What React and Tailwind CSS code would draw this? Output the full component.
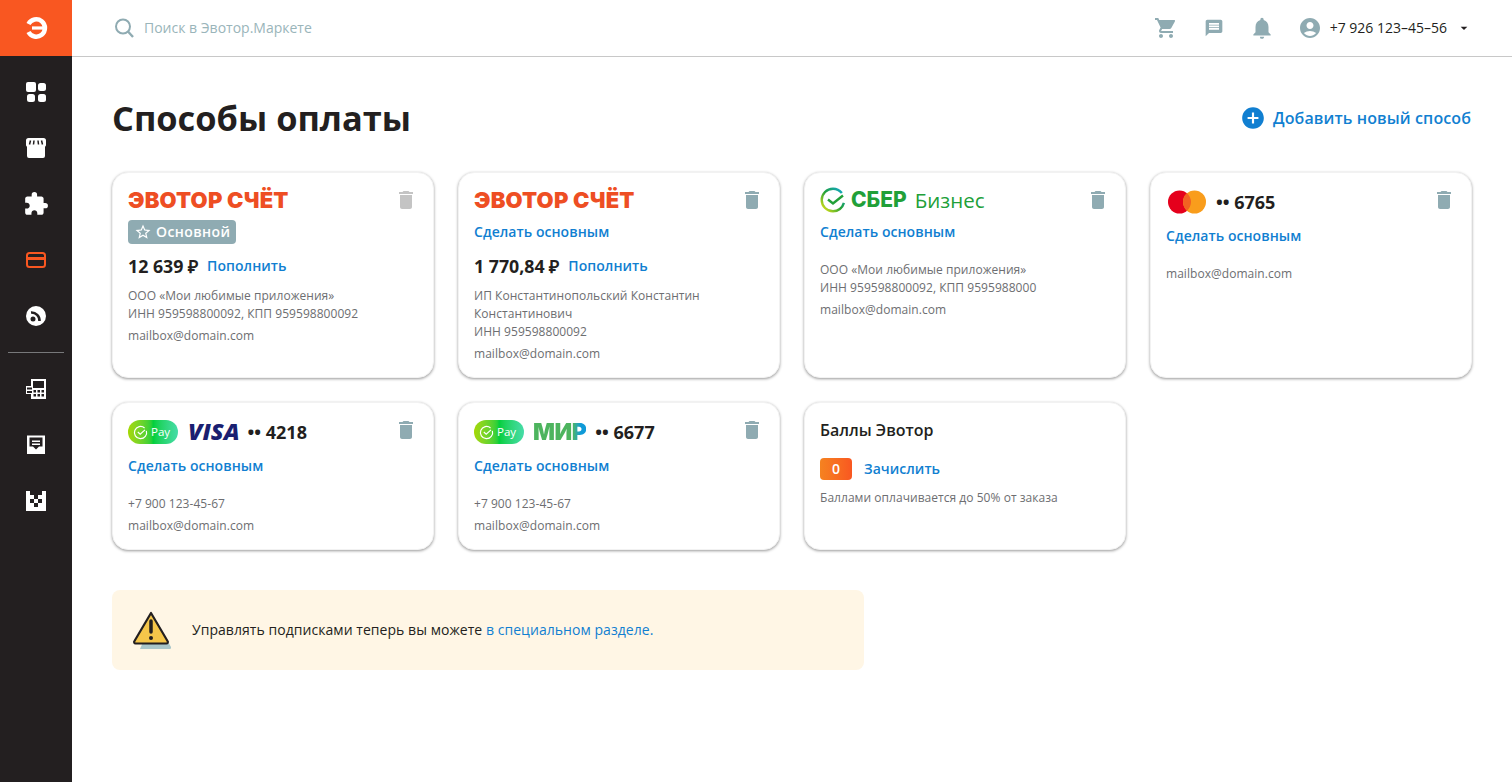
import React from 'react';
import {
    MdShoppingCart,
    MdNotifications,
    MdAccountCircle,
    MdDelete,
    MdStarBorder,
    MdAddCircle,
    MdExtension,
    MdMessage,
    MdArrowDropDown,
} from 'react-icons/md';

const DashIcon = () => (
    <svg width="24" height="24" viewBox="0 0 24 24" fill="currentColor">
        <rect x="2" y="2" width="10" height="10" rx="2" />
        <rect x="14" y="3" width="8" height="8" rx="2.5" />
        <rect x="3" y="14" width="8" height="8" rx="2.5" />
        <rect x="14" y="14" width="8" height="8" rx="2.5" />
    </svg>
);

const StoreIcon = () => (
    <svg width="24" height="24" viewBox="0 0 24 24" fill="currentColor">
        <path d="M4.5 2h15A2.5 2.5 0 0 1 22 4.5V9a2 2 0 0 1-1 1.7V20a2 2 0 0 1-2 2H5a2 2 0 0 1-2-2v-9.300A2 2 0 0 1 2 9V4.500A2.500 2.500 0 0 1 4.500 2z" />
        <path d="M6.500 4.500l-1 4M10 4.500l-.5 4M14 4.500l.5 4M17.500 4.500l1 4" stroke="#231f20" strokeWidth="1.500" fill="none" />
    </svg>
);

const CardIcon = () => (
    <svg width="24" height="24" viewBox="0 0 24 24" fill="none" stroke="currentColor" strokeWidth="2">
        <rect x="3" y="5" width="18" height="14" rx="2.500" />
        <path d="M3 10.500h18" strokeWidth="3" />
    </svg>
);

const FeedIcon = () => (
    <svg width="24" height="24" viewBox="0 0 24 24">
        <circle cx="12" cy="12" r="10" fill="currentColor" />
        <circle cx="9" cy="15" r="2.500" fill="#231f20" />
        <path d="M7 8.500a8 8 0 0 1 8.500 8.500" stroke="#231f20" strokeWidth="2.600" fill="none" />
    </svg>
);

const TerminalIcon = () => (
    <svg width="24" height="24" viewBox="0 0 24 24" fill="currentColor">
        <path d="M7 2h15v20H7v-5H2v-8h5V2z" fillRule="evenodd" />
        <rect x="9" y="4" width="11" height="7" fill="#231f20" />
        <path d="M3 10.500h5v2H3zM3 14h5v2H3z" fill="#231f20" />
        <path d="M9.500 13h2.500v2.500H9.500zM13.500 13H16v2.500h-2.500zM17.500 13H20v2.500h-2.500zM9.500 17H12v2.500H9.500zM13.500 17H16v2.500h-2.500zM17.500 17H20v2.500h-2.500z" fill="#231f20" />
    </svg>
);

const ReceiptIcon = () => (
    <svg width="24" height="24" viewBox="0 0 24 24" fill="currentColor">
        <path d="M3 2.500h18V21H3z" />
        <path d="M5.500 4.500h13v9H15l-3 3-3-3H5.500z" fill="#231f20" />
        <path d="M8 7.500h8v1.600H8zM8 10.500h8v1.600H8z" />
    </svg>
);

const QrIcon = () => (
    <svg width="24" height="24" viewBox="0 0 24 24" fill="currentColor">
        <rect x="2" y="2" width="20" height="20" />
        <path d="M6 2h4v2H6zM10 2h8v4h-4v4h-4V6H6V2zM6 10h4v4H6zM14 10h4v4h-4zM10 14h4v4h-4z" fill="#231f20" />
    </svg>
);

const SIDE_ITEMS = [
    { icon: <DashIcon /> },
    { icon: <StoreIcon /> },
    { icon: <MdExtension size={26} /> },
    { icon: <CardIcon />, active: true },
    { icon: <FeedIcon /> },
];

const SIDE_ITEMS_BOTTOM = [<TerminalIcon key="t" />, <ReceiptIcon key="r" />, <QrIcon key="q" />];

const Sidebar = () => (
    <aside className="w-[72px] shrink-0 bg-[#231f20] text-white flex flex-col">
        <div className="h-14 mb-2 bg-[#f95721] flex items-center justify-center">
            <svg width="24" height="24" viewBox="0 0 24 24" fill="none" stroke="#fff" strokeWidth="4.500">
                <path d="M4.500 8A8.700 8.700 0 1 1 4.500 16" />
                <path d="M8 12h11" strokeWidth="3.200" />
            </svg>
        </div>
        {SIDE_ITEMS.map((item, i) => (
            <div key={i} className={item.active ? 'h-14 flex items-center justify-center text-[#f95721]' : 'h-14 flex items-center justify-center'}>
                {item.icon}
            </div>
        ))}
        <div className="h-px bg-[#77787a] mx-2 my-2" />
        {SIDE_ITEMS_BOTTOM.map((icon, i) => (
            <div key={i} className="h-14 flex items-center justify-center">
                {icon}
            </div>
        ))}
    </aside>
);

const Header = () => (
    <header className="h-[57px] shrink-0 border-b border-[#c8c8c8] flex items-center pl-10 pr-9">
        <svg width="24" height="24" viewBox="0 0 24 24" fill="none" stroke="#8fabb2" strokeWidth="2" className="mr-2">
            <circle cx="11" cy="10.500" r="7" />
            <path d="M16 15.500l5 5.500" strokeWidth="2.400" />
        </svg>
        <span className="text-sm text-[#9ab5ba]">Поиск в Эвотор.Маркете</span>
        <div className="ml-auto flex items-center text-[#8fabb2]">
            <div className="w-12 flex justify-center"><MdShoppingCart size={24} /></div>
            <div className="w-12 flex justify-center"><MdMessage size={20} /></div>
            <div className="w-12 flex justify-center"><MdNotifications size={26} /></div>
            <MdAccountCircle size={24} className="ml-3 mr-2" />
            <span className="text-sm text-[#231f20]">+7 926 123–45–56</span>
            <MdArrowDropDown size={16} className="ml-[9px] mr-1 text-[#231f20]" />
        </div>
    </header>
);

const Link = ({ children, className = '' }) => (
    <a className={`text-sm font-semibold tracking-[0.05px] text-[#117fd1] leading-6 ${className}`}>{children}</a>
);

const EvotorLogo = () => (
    <span className="font-['Inter',sans-serif] font-black text-[22px] leading-6 tracking-[0.2px] text-[#ee4e23] whitespace-nowrap">
        ЭВОТОР СЧЁТ
    </span>
);

const SberLogo = () => (
    <span className="flex items-center h-6 text-[#21a038] whitespace-nowrap">
        <svg width="26" height="26" viewBox="0 0 26 26" fill="none" className="mr-[5px]">
            <defs>
                <linearGradient id="sber" x1="0" y1="1" x2="1" y2="0">
                    <stop offset="0" stopColor="#f2e913" />
                    <stop offset="0.5" stopColor="#21a038" />
                    <stop offset="1" stopColor="#0fa8e0" />
                </linearGradient>
            </defs>
            <circle cx="13" cy="13" r="11.300" stroke="url(#sber)" strokeWidth="2.400" strokeDasharray="60 11" strokeDashoffset="-3" />
            <path d="M8 12.500l5 4 10-8" stroke="#21a038" strokeWidth="2.400" />
        </svg>
        <span className="font-['Inter',sans-serif] font-extrabold text-[21px] mr-2">СБЕР</span>
        <span className="text-[20.500px]">Бизнес</span>
    </span>
);

const Masked = ({ digits }) => (
    <span className="text-[18px] font-bold text-[#231f20] whitespace-nowrap">•• {digits}</span>
);

const PayPill = () => (
    <span className="w-[50px] h-6 rounded-full bg-linear-to-r from-[#a5d800] via-[#00cf3a] to-[#46dca8] flex items-center pl-[5px] gap-[3px] text-white text-[11.500px]">
        <svg width="15" height="15" viewBox="0 0 14 14" fill="none" stroke="#fff" strokeWidth="1.100">
            <path d="M12.500 5.500A5.700 5.700 0 1 1 10.800 2.800" />
            <path d="M4.500 6.500l2.200 2 4.500-4" />
        </svg>
        Pay
    </span>
);

const MasterLogo = () => (
    <svg width="38" height="24" viewBox="0 0 38 24" className="ml-0.5">
        <circle cx="11.500" cy="12" r="11.500" fill="#e5001c" />
        <circle cx="26.500" cy="12" r="11.500" fill="#f99d1c" />
        <path d="M19 3.300a11.500 11.500 0 0 1 0 17.400a11.500 11.500 0 0 1 0-17.400z" fill="#f26122" />
    </svg>
);

const Trash = ({ muted }) => (
    <MdDelete size={24} className={muted ? 'shrink-0 text-[#c4c4c4]' : 'shrink-0 text-[#8fabb2]'} />
);

const Card = ({ logo, muted, children, tall, noTrash }) => (
    <div className="bg-white rounded-2xl border border-[#f2f2f2] shadow-[0_1px_3px_rgba(0,0,0,0.4)] px-[15px] pt-[15px] pb-[14px]">
        <div className={tall ? 'flex items-start justify-between h-7' : 'flex items-start justify-between h-6'}>
            <div className={tall ? 'flex items-center h-7' : 'flex items-center h-6'}>{logo}</div>
            {!noTrash && <Trash muted={muted} />}
        </div>
        {children}
    </div>
);

const Amount = ({ value, action = 'Пополнить' }) => (
    <div className="mt-2.5 flex items-center h-6">
        <span className="text-[17.800px] font-bold text-[#231f20] mr-[9px]">{value}</span>
        <Link>{action}</Link>
    </div>
);

const Info = ({ lines, className = 'mt-[17px]' }) => (
    <div className={`${className} text-xs leading-[18px] tracking-[0.04px] text-[#6d6e71]`}>
        {lines.map((l, i) => <div key={i}>{l}</div>)}
        <div className="mt-1">mailbox@domain.com</div>
    </div>
);

const Default = () => <Link className="block mt-2">Сделать основным</Link>;

const Main = () => (
    <main className="flex-1 pl-10 pr-10 pt-[39px]">
        <div className="flex items-center justify-between mb-8 h-11">
            <h1 className="text-[34.400px] font-bold text-[#231f20] leading-11">Способы оплаты</h1>
            <a className="flex items-center mr-px text-base font-semibold tracking-[0.1px] text-[#117fd1]">
                <MdAddCircle size={26} className="mr-[7px]" />
                Добавить новый способ
            </a>
        </div>

        <div className="grid grid-cols-4 gap-6">
            <Card muted logo={<EvotorLogo />}>
                <div className="mt-2 w-[108px] h-6 rounded bg-[#8fabb2] text-white text-sm font-semibold tracking-[0.4px] flex items-center pl-1.5 gap-1">
                    <MdStarBorder size={18} />
                    Основной
                </div>
                <Amount value="12 639 ₽" />
                <Info className="mt-[9px]" lines={['ООО «Мои любимые приложения»', 'ИНН 959598800092, КПП 959598800092']} />
            </Card>
            <Card logo={<EvotorLogo />}>
                <Default />
                <Amount value="1 770,84 ₽" />
                <Info className="mt-[9px]" lines={['ИП Константинопольский Константин Константинович', 'ИНН 959598800092']} />
            </Card>
            <Card logo={<SberLogo />}>
                <Default />
                <Info lines={['ООО «Мои любимые приложения»', 'ИНН 959598800092, КПП 9595988000']} />
            </Card>
            <Card tall logo={<span className="flex items-center gap-2.5"><MasterLogo /><Masked digits="6765" /></span>}>
                <Default />
                <Info lines={[]} />
            </Card>

            <Card tall logo={
                <span className="flex items-center">
                    <PayPill />
                    <span className="ml-2.5 mr-2 italic font-extrabold text-[23.500px] text-[#1a1f71]">VISA</span>
                    <Masked digits="4218" />
                </span>
            }>
                <Default />
                <Info lines={['+7 900 123-45-67']} />
            </Card>
            <Card tall logo={
                <span className="flex items-center">
                    <PayPill />
                    <span className="ml-[9px] mr-[9px] font-['Inter',sans-serif] font-black text-[23px] tracking-[-0.5px] text-transparent bg-clip-text bg-linear-to-r from-[#4db45e] from-75% to-[#0f9ad8] to-90%">МИР</span>
                    <Masked digits="6677" />
                </span>
            }>
                <Default />
                <Info lines={['+7 900 123-45-67']} />
            </Card>
            <Card noTrash logo={<span className="text-[16px] font-semibold text-[#231f20]">Баллы Эвотор</span>}>
                <div className="mt-4 flex items-center h-[22px]">
                    <span className="w-8 h-[22px] rounded bg-linear-to-r from-[#f58220] to-[#f95721] text-white text-sm font-semibold flex items-center justify-center mr-3">0</span>
                    <Link>Зачислить</Link>
                </div>
                <p className="mt-[9px] text-xs leading-[18px] tracking-[0.04px] text-[#6d6e71]">Баллами оплачивается до 50% от заказа</p>
            </Card>
        </div>

        <div className="mt-10 w-[752px] h-20 rounded-lg bg-[#fff6e5] flex items-center pl-5 gap-5 text-sm tracking-[0.05px] text-[#231f20]">
            <svg width="40" height="40" viewBox="0 0 40 40" fill="none">
                <path d="M22 7l17 30a1.500 1.500 0 0 1-1.500 2H8z" fill="#a9c6c9" />
                <path d="M19 3L2.500 31a1.500 1.500 0 0 0 1.300 2.500h30.400a1.500 1.500 0 0 0 1.300-2.500L19 3z" fill="#f5c64a" stroke="#231f20" strokeWidth="2.200" strokeLinejoin="round" />
                <path d="M19 11v11" stroke="#231f20" strokeWidth="3.500" strokeLinecap="round" />
                <circle cx="19" cy="28" r="2" fill="#231f20" />
            </svg>
            <span>Управлять подписками теперь вы можете <a className="text-[#117fd1]">в специальном разделе.</a></span>
        </div>
    </main>
);

const App = () => (
    <div className="min-h-screen flex bg-white font-['Open_Sans',sans-serif]">
        <Sidebar />
        <div className="flex-1 flex flex-col">
            <Header />
            <Main />
        </div>
    </div>
);

export default App;
